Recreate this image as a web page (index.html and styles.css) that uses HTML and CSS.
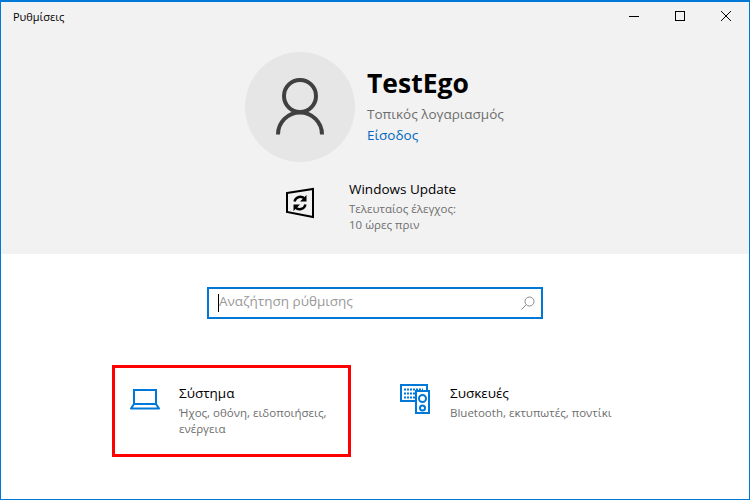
FILE: index.html
```html
<!DOCTYPE html>
<html lang="el">
<head>
<meta charset="utf-8">
<title>Ρυθμίσεις</title>
<link rel="stylesheet" href="styles.css">
</head>
<body>
<div class="window">
  <header class="top">
    <div class="titlebar">
      <span class="title">Ρυθμίσεις</span>
      <div class="controls">
        <svg class="ctl" width="46" height="28" viewBox="0 0 46 28"><path d="M18 14.5h10" stroke="#000" fill="none"/></svg>
        <svg class="ctl" width="46" height="28" viewBox="0 0 46 28"><rect x="18.5" y="9.500" width="9" height="9" stroke="#000" fill="none"/></svg>
        <svg class="ctl" width="46" height="28" viewBox="0 0 46 28"><path d="M18 9l10 10M28 9l-10 10" stroke="#000" fill="none"/></svg>
      </div>
    </div>
    <div class="profile">
      <div class="avatar">
        <svg width="110" height="110" viewBox="0 0 110 110"><circle cx="55" cy="44" r="16" fill="none" stroke="#404040" stroke-width="4"/><path d="M33 82.500a22 22 0 0 1 44 0" fill="none" stroke="#404040" stroke-width="4"/></svg>
      </div>
      <div class="who">
        <div class="name">TestEgo</div>
        <div class="kind">Τοπικός λογαριασμός</div>
        <a class="signin">Είσοδος</a>
      </div>
    </div>
    <div class="update">
      <svg class="update-icon" width="30" height="32" viewBox="0 0 30 32"><path d="M2 6l26-4v28L2 25z" fill="none" stroke="#000" stroke-width="2"/><path d="M9.500 14.500a6 6 0 0 1 10.500-2.500M20.500 17.500a6 6 0 0 1-10.500 2.500" fill="none" stroke="#000" stroke-width="2.400"/><path d="M21.500 8v6.500h-6.500zM8.500 24v-6.500h6.500z" fill="#000"/></svg>
      <div class="update-text">
        <div class="update-title">Windows Update</div>
        <div class="sub">Τελευταίος έλεγχος:</div>
        <div class="sub">10 ώρες πριν</div>
      </div>
    </div>
  </header>
  <main class="content">
    <div class="search">
      <span class="caret"></span>
      <span class="placeholder">Αναζήτηση ρύθμισης</span>
      <svg class="glass" width="14" height="14" viewBox="0 0 14 14"><circle cx="8.500" cy="5.500" r="4.500" fill="none" stroke="#8a8a8a"/><path d="M5.200 8.800L.5 13.500" stroke="#8a8a8a" fill="none"/></svg>
    </div>
    <div class="cards">
      <section class="card card-marked">
        <svg class="card-icon laptop" width="30" height="22" viewBox="0 0 30 22"><path d="M4 16V2h22v14" fill="none" stroke="#0078d7" stroke-width="2"/><path d="M4 16h22l3 4.500H1z" fill="none" stroke="#0078d7" stroke-width="2" stroke-linejoin="round"/></svg>
        <div>
          <div class="card-title">Σύστημα</div>
          <div class="card-sub">Ήχος, οθόνη, ειδοποιήσεις, ενέργεια</div>
        </div>
      </section>
      <section class="card card-plain">
        <svg class="card-icon" width="30" height="30" viewBox="0 0 30 30"><path d="M16 17H1V1h26v6" fill="none" stroke="#0078d7" stroke-width="2"/><path d="M4 5.500h19M4 9.500h11M4 13.500h11" stroke="#0078d7" stroke-width="2" stroke-dasharray="2 1" fill="none"/><rect x="16" y="7" width="13" height="22" fill="#fff" stroke="#0078d7" stroke-width="2"/><circle cx="22.500" cy="14.500" r="3.500" fill="none" stroke="#0078d7" stroke-width="2"/><circle cx="22.500" cy="24" r="2.500" fill="none" stroke="#0078d7" stroke-width="2"/></svg>
        <div>
          <div class="card-title">Συσκευές</div>
          <div class="card-sub">Bluetooth, εκτυπωτές, ποντίκι</div>
        </div>
      </section>
    </div>
  </main>
</div>
</body>
</html>
```
FILE: styles.css
```css
* { box-sizing: border-box; }
html, body { margin: 0; padding: 0; }
body { width: 750px; height: 500px; overflow: hidden; font-family: "Open Sans", "Noto Sans", sans-serif; background: #fff; }
.window { width: 750px; height: 500px; border: 1px solid #0078d7; border-top-width: 2px; display: flex; flex-direction: column; background: #fff; }
.top { height: 252px; background: #f2f2f2; display: flex; flex-direction: column; }
.titlebar { height: 28px; display: flex; justify-content: space-between; align-items: center; padding-left: 12px; }
.title { font-size: 11px; color: #000; }
.controls { display: flex; }
.ctl { display: block; }
.profile { display: flex; align-items: center; gap: 12px; margin: 22px 0 0 244px; }
.avatar { width: 110px; height: 110px; border-radius: 50%; background: #e6e6e6; }
.avatar svg { display: block; }
.who { display: flex; flex-direction: column; margin-top: -2px; }
.name { font-size: 26.500px; font-weight: 700; line-height: 32px; color: #000; }
.kind { font-size: 13.500px; line-height: 20px; color: #6e6e6e; margin-top: 5px; }
.signin { font-size: 13.500px; line-height: 20px; color: #0067c0; margin-top: 1px; }
.update { display: flex; gap: 34px; margin: 17px 0 0 284px; }
.update-icon { margin-top: 8px; flex: none; }
.update-title { font-size: 13.500px; line-height: 20px; color: #000; }
.sub { font-size: 11.500px; line-height: 16px; color: #6e6e6e; }
.update-title + .sub { margin-top: 2px; }
.content { flex: 1; display: flex; flex-direction: column; align-items: center; }
.search { width: 336px; height: 32px; margin-top: 33px; border: 2px solid #0078d7; display: flex; align-items: center; padding: 0 6px 0 9px; background: #fff; }
.caret { width: 1px; height: 18px; background: #000; }
.placeholder { font-size: 13.500px; color: #999; flex: 1; padding-bottom: 5px; }
.glass { display: block; }
.cards { display: flex; align-self: flex-start; margin: 46px 0 0 111px; }
.card { width: 239px; height: 92px; display: flex; gap: 19px; padding: 16px 16px 0 15px; border: 3px solid transparent; margin-right: 31px; }
.card-marked { border-color: #f00; }
.card-plain { gap: 20px; padding-right: 0; }
.card-icon { flex: none; display: block; }
.laptop { margin-top: 4px; }
.card-title { font-size: 13.500px; line-height: 19px; color: #000; }
.card-sub { font-size: 11.500px; line-height: 16px; color: #6e6e6e; margin-top: 2px; }
```
